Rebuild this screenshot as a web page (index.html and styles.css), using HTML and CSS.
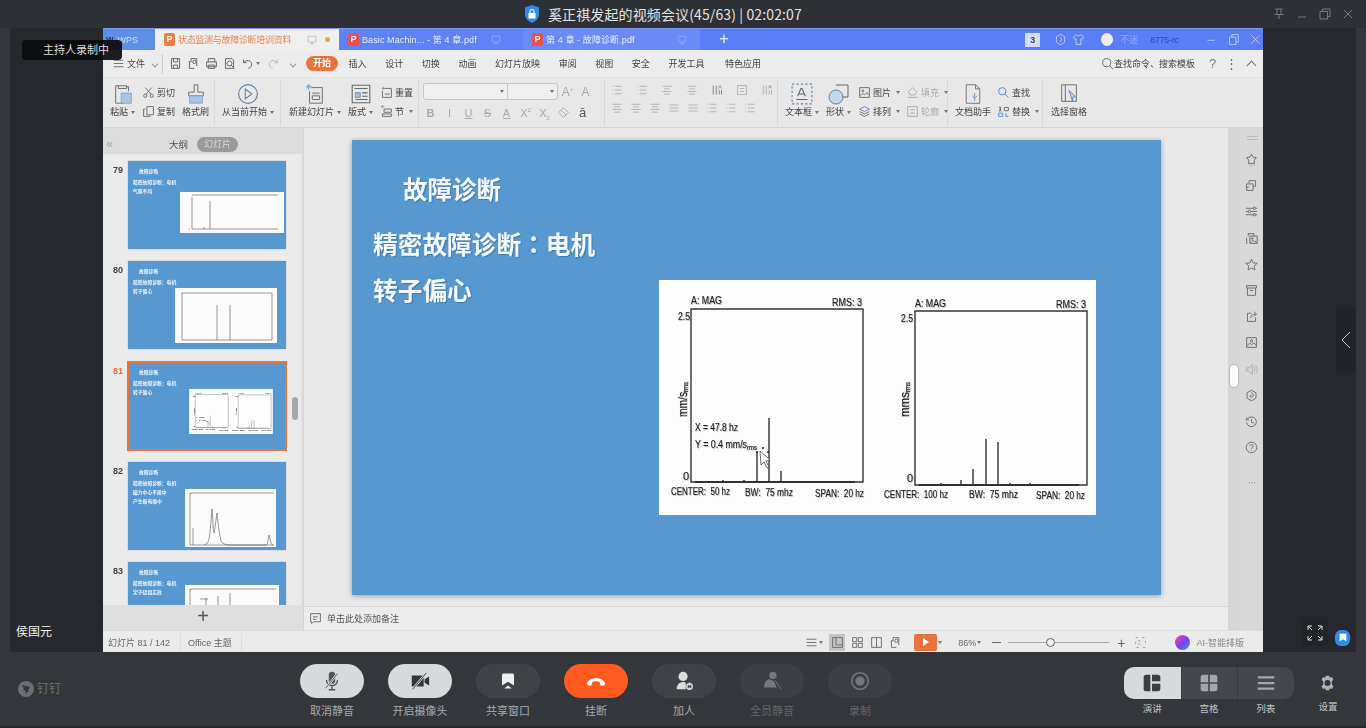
FILE: index.html
```html
<!DOCTYPE html>
<html lang="zh-CN">
<head>
<meta charset="utf-8">
<title>视频会议</title>
<link rel="stylesheet" href="styles.css">
</head>
<body>
<svg class="defs" aria-hidden="true">
  <defs>
    <symbol id="i-line" viewBox="0 0 16 16"><path d="M2 4h12M2 8h12M2 12h12"/></symbol>
    <symbol id="i-min" viewBox="0 0 16 16"><path d="M3 9h9"/></symbol>
    <symbol id="i-restore" viewBox="0 0 16 16"><path d="M3 5h8v9H3zM6 5V2h8v9h-3"/></symbol>
    <symbol id="i-x" viewBox="0 0 16 16"><path d="M3 3l10 10M13 3L3 13"/></symbol>
    <symbol id="i-skin" viewBox="0 0 16 16"><path d="M5 2L1.500 5l2 3L5 7v7h6V7l1.500 1 2-3L11 2c-1 2-5 2-6 0z"/></symbol>
    <symbol id="i-drop" viewBox="0 0 16 16"><path d="M8 1.500l5 3v7l-5 3-5-3v-7z"/><path d="M8 5c1 2 2 3 1.500 4.500-.8 1.300-2.700 1-3-.5"/></symbol>
    <symbol id="i-search" viewBox="0 0 16 16"><circle cx="7" cy="7" r="5"/><path d="M11 11l4 4"/></symbol>
    <symbol id="i-grid" viewBox="0 0 16 16"><path d="M2 2h5v5H2zM9 2h5v5H9zM2 9h5v5H2zM9 9h5v5H9z"/></symbol>
    <symbol id="i-book" viewBox="0 0 16 16"><path d="M2 2h12v12H2zM8 2v12"/></symbol>
    <symbol id="i-normal" viewBox="0 0 16 16"><path d="M2 2h12v12H2zM6 2v9M6 11h8"/></symbol>
    <symbol id="i-save" viewBox="0 0 16 16"><path d="M3 2h10v12H3zM5.500 2v4h5V2M5.500 14v-4h5v4"/></symbol>
    <symbol id="i-print" viewBox="0 0 16 16"><path d="M4 6V2h8v4M2 6h12v6H2zM4 10h8v4H4z"/></symbol>
    <symbol id="i-pdf" viewBox="0 0 16 16"><path d="M5 2h7v9M5 2v4H2M3 6v8h6"/><circle cx="9" cy="6" r="2"/></symbol>
    <symbol id="i-prev" viewBox="0 0 16 16"><path d="M3 2h8l2 2v10H3z"/><circle cx="8" cy="8" r="3"/><path d="M10 10l4 4"/></symbol>
    <symbol id="i-undo" viewBox="0 0 16 16"><path d="M3 3v4h4M3 7c3-4 9-3 10 1 .6 3-1 5-4 6"/></symbol>
    <symbol id="i-redo" viewBox="0 0 16 16"><path d="M13 3v4H9M13 7C10 3 4 4 3 8c-.6 3 1 5 4 6"/></symbol>
    <symbol id="i-paste" viewBox="0 0 20 24"><path d="M5 3H2v19h9M5 3h9v3H5zM14 4h2v5"/><rect x="8" y="11" width="11" height="11" fill="#a9c4e4" stroke="#7fa3cf"/></symbol>
    <symbol id="i-cut" viewBox="0 0 16 16"><circle cx="4" cy="12" r="2"/><circle cx="12" cy="12" r="2"/><path d="M5 10l7-8M11 10L4 2"/></symbol>
    <symbol id="i-copy" viewBox="0 0 16 16"><path d="M6 2h8v10H6zM4 5H2v9h8v-1"/></symbol>
    <symbol id="i-brush" viewBox="0 0 20 24"><path d="M8 2h4v8h6v4H2v-4h6z"/><path d="M3 14h14v8H3z" fill="#a9c4e4" stroke="#7fa3cf"/></symbol>
    <symbol id="i-play" viewBox="0 0 20 20"><circle cx="10" cy="10" r="8.500" stroke="#5f83ad"/><path d="M7.500 5.500l6 4.500-6 4.500z" stroke="#5f83ad"/></symbol>
    <symbol id="i-newslide" viewBox="0 0 20 24"><path d="M6 5h12v17H4V9"/><path d="M7 11h8M7 14h8v4H7z"/><path d="M3 1v7M0 4h7M1 2l4 4M5 2L1 6" stroke="#7fa3cf"/></symbol>
    <symbol id="i-layout" viewBox="0 0 20 20"><path d="M2 2h16v16H2zM4 5h12M5 9h4v4H5zM11 9h5M11 12h5M5 15h11" /><path d="M5 9h4v4H5z" fill="#a9c4e4" stroke="#7fa3cf"/></symbol>
    <symbol id="i-reset" viewBox="0 0 16 16"><path d="M4 3h10v11H3V6M6 10h6"/><path d="M2 3h5M4 1v4" stroke="#5f9fb0"/></symbol>
    <symbol id="i-section" viewBox="0 0 16 16"><path d="M5 5h9v4H5zM3 11h11v3H3z"/><path d="M1 2h4M3 0v4" stroke="#7fa3cf"/></symbol>
    <symbol id="i-eraser" viewBox="0 0 16 16"><path d="M8 2l6 6-6 6-6-6zM5 5l6 6"/></symbol>
    <symbol id="i-bul" viewBox="0 0 16 16"><path d="M5 3h9M5 8h9M5 13h9M2 3h1M2 8h1M2 13h1"/></symbol>
    <symbol id="i-ctr" viewBox="0 0 16 16"><path d="M2 3h12M4 6.500h8M2 10h12M4 13.500h8"/></symbol>
    <symbol id="i-box" viewBox="0 0 16 16"><path d="M2 2h12v12H2zM5 6h6M5 10h6"/></symbol>
    <symbol id="i-mon" viewBox="0 0 16 16"><path d="M2 2h12v9H2zM8 11v3M5 14h6"/></symbol>
    <symbol id="i-cols" viewBox="0 0 16 16"><path d="M3 2v12M7 2v12M11 8v6M14 8v6"/><path d="M10 6l2-4 2 4" stroke="#6f93bf"/></symbol>
    <symbol id="i-textbox" viewBox="0 0 20 20"><path d="M1 1h18v18H1z" stroke-dasharray="2 2" stroke="#5f83ad"/><path d="M6 12l3-7h1l3 7M7 10h5M5 15h10"/></symbol>
    <symbol id="i-shape" viewBox="0 0 22 22"><path d="M8 2h12v12H13"/><circle cx="8" cy="14" r="7" fill="#c4d7ec" stroke="#5f83ad"/></symbol>
    <symbol id="i-pic" viewBox="0 0 16 16"><path d="M2 2h12v12H2z"/><circle cx="6" cy="6" r="1.200"/><path d="M3 12l3-3 2 2 3-3 2 3"/></symbol>
    <symbol id="i-stack" viewBox="0 0 16 16"><path d="M8 2l6 3-6 3-6-3z" stroke="#5f83ad"/><path d="M2 8l6 3 6-3M2 11l6 3 6-3"/></symbol>
    <symbol id="i-fill" viewBox="0 0 16 16"><path d="M8 2l5 5-2 4H5L3 7zM2 14h12"/></symbol>
    <symbol id="i-doc" viewBox="0 0 20 26"><path d="M2 2h11l5 5v17H2zM13 2v5h5"/><path d="M12 12v9M9 15l3 3 3-3" stroke="#5f83ad"/></symbol>
    <symbol id="i-find" viewBox="0 0 16 16"><circle cx="6.500" cy="6.500" r="4.500" stroke="#4c86d0"/><path d="M10 10l4 4" stroke="#4c86d0"/></symbol>
    <symbol id="i-swap" viewBox="0 0 16 16"><path d="M3 2l2 6M5 2L3 8M9 3h5v4H9z"/><path d="M2 10h5v4H2zM11 10v4h3" stroke="#4c86d0"/></symbol>
    <symbol id="i-pane" viewBox="0 0 20 24"><path d="M2 2h16v18H2zM6 2v18"/><path d="M10 8l7 7-3 .5 0 5z" fill="#c4d7ec" stroke="#5f83ad"/></symbol>
    <symbol id="i-note" viewBox="0 0 16 16"><path d="M2 2h12v10H6l-3 2v-2H2zM5 6h6M5 9h4"/></symbol>
    <symbol id="r-a" viewBox="0 0 16 16"><path d="M8 1.500l2 3.500 4 .8-2.700 3 .5 4H4.200l.5-4L2 5.800 6 5zM5 15h1M8 15h1M11 15h1"/></symbol>
    <symbol id="r-b" viewBox="0 0 16 16"><path d="M5 5V2h8v7h-3M2 6h8v8H2zM1 9l2 2 2-2"/></symbol>
    <symbol id="r-c" viewBox="0 0 16 16"><path d="M1 4h9M13 4h2M1 8h3M7 8h8M1 12h9M13 12h2"/><circle cx="11.500" cy="4" r="1.500"/><circle cx="5.500" cy="8" r="1.500"/><circle cx="11.500" cy="12" r="1.500"/></symbol>
    <symbol id="r-d" viewBox="0 0 16 16"><path d="M4 5V2h7v3M2 7v7h1M6 5h9v9H6z"/><circle cx="9" cy="8" r="1"/><path d="M7 13l3-3 2 2 1-1 1 2"/></symbol>
    <symbol id="r-e" viewBox="0 0 16 16"><path d="M8 1.500l2 4.500 5 .5-3.700 3.300 1 5L8 12.300 3.700 14.800l1-5L1 6.500 6 6z"/></symbol>
    <symbol id="r-f" viewBox="0 0 16 16"><path d="M2 2h12v3H2zM3 5v9h10V5M6 8h4"/></symbol>
    <symbol id="r-g" viewBox="0 0 16 16"><path d="M8 4H3v10h10V9M7 10c0-4 3-5 7-5M11 2l3 3-3 3"/></symbol>
    <symbol id="r-h" viewBox="0 0 16 16"><path d="M2 2h12v12H2z"/><circle cx="8" cy="6" r="1.500"/><path d="M2 12l4-3 2 1.500 3-2 3 3"/></symbol>
    <symbol id="r-i" viewBox="0 0 16 16"><path d="M2 6h3l4-4v12l-4-4H2zM11 5c1.500 1.500 1.500 4.500 0 6M13 3c2.500 2.500 2.500 7.500 0 10"/></symbol>
    <symbol id="r-j" viewBox="0 0 16 16"><path d="M8 1.500l5.500 3.200v6.600L8 14.500l-5.500-3.200V4.700z"/><path d="M8 4c1 2 3 3 2 5-1 1.500-3 1.500-4 0 0-1 1-1 2-1"/></symbol>
    <symbol id="r-k" viewBox="0 0 16 16"><path d="M3 5a6 6 0 1 1-1 4M1 6h4M2 3v3M8 5v4l3 1"/></symbol>
    <symbol id="r-l" viewBox="0 0 16 16"><circle cx="8" cy="8" r="6.500"/><path d="M6 6.200c0-2.500 4-2.500 4 0 0 1.800-2 1.800-2 3.300M8 11.500v1"/></symbol>
    <symbol id="f-mic" viewBox="0 0 24 24"><rect x="8.500" y="2" width="7" height="13" rx="3.500" fill="#50535a"/><path d="M6 11c0 8 12 8 12 0M12 17v4M8.500 21.500h7" fill="none" stroke="#50535a" stroke-width="1.500"/><path d="M5 20L18 4" stroke="#d8d9db" stroke-width="2.500"/><path d="M5 20L18 4" stroke="#50535a" stroke-width="1"/></symbol>
    <symbol id="f-cam" viewBox="0 0 24 24"><path d="M3 6h13v12H3zM17 10l5-3v10l-5-3z" fill="#33363b"/><path d="M4 21L19 3" stroke="#d8d9db" stroke-width="2.500"/><path d="M4 21L19 3" stroke="#33363b" stroke-width="1"/></symbol>
    <symbol id="f-share" viewBox="0 0 24 24"><path d="M4 4a2 2 0 0 1 2-2h12a2 2 0 0 1 2 2v14l-8-5-8 5z" fill="#f0f0f0"/><path d="M7 22l5-4 5 4z" fill="#f0f0f0"/></symbol>
    <symbol id="f-hang" viewBox="0 0 24 24"><path d="M2 15c2-8 18-8 20 0l-1 2h-4l-1-4c-2-1-6-1-8 0l-1 4H3z" fill="#fff"/></symbol>
    <symbol id="f-add" viewBox="0 0 24 24"><circle cx="11" cy="7" r="5" fill="#ddd"/><path d="M4 21c0-5 3-8 7-8 2 0 3 .5 3 2v6z" fill="#ddd"/><path d="M18 14v3M18 19v2" stroke="#ddd" stroke-width="2"/><circle cx="18" cy="18" r="3" fill="none" stroke="#ddd" stroke-width="1.500"/></symbol>
    <symbol id="f-muteall" viewBox="0 0 24 24"><circle cx="13" cy="6" r="4" fill="#75777c"/><path d="M3 19c1-6 3-9 6-9l5 2 3 7z" fill="#75777c"/><path d="M14 10l7 11" stroke="#3c3f44" stroke-width="2"/><path d="M15 11l7 10" stroke="#75777c"/></symbol>
    <symbol id="f-rec" viewBox="0 0 24 24"><circle cx="12" cy="12" r="9" fill="none" stroke="#75777c" stroke-width="1.700"/><circle cx="12" cy="12" r="5" fill="#75777c"/></symbol>
    <symbol id="f-spk" viewBox="0 0 24 24"><path d="M2 5a3 3 0 0 1 3-3h5v20H5a3 3 0 0 1-3-3zM12 2h7a3 3 0 0 1 3 3v5H12zM12 13h10v6a3 3 0 0 1-3 3h-7z" fill="#3b3e43"/></symbol>
    <symbol id="f-grid" viewBox="0 0 24 24"><path d="M2 5a3 3 0 0 1 3-3h6v9H2zM13 2h6a3 3 0 0 1 3 3v6h-9zM2 13h9v9H5a3 3 0 0 1-3-3zM13 13h9v6a3 3 0 0 1-3 3h-6z" fill="#a4a6aa"/></symbol>
    <symbol id="f-list" viewBox="0 0 24 24"><path d="M1 3h22v3H1zM1 10.500h22v3H1zM1 18h22v3H1z" fill="#a4a6aa"/></symbol>
    <symbol id="f-gear" viewBox="0 0 24 24"><path d="M9.500 1h5l1 3.200 3-1.300 2.500 4.300-2.500 2.300v5l2.500 2.300-2.500 4.300-3-1.300-1 3.200h-5l-1-3.200-3 1.300L3 16.800l2.500-2.300v-5L3 7.200l2.500-4.300 3 1.300z" fill="#b0b2b5"/><circle cx="12" cy="12" r="4.500" fill="#33363b"/></symbol>
    <symbol id="chart-pair" viewBox="0 0 437 235">
      <rect width="437" height="235" fill="#fdfdfd"/>
      <path class="axis" d="M32 29h172v173H32zM256 31h172v174H256z"/>
      <path class="peak" d="M36 202h160M98 202v-30M110 202v-64M122 202v-11M64 202v-2M85 202v-2M260 205h160M314 205v-16M327 205v-46M339 205v-43M302 205v-5M282 205v-2M351 205v-2M371 205v-2"/>
      <path class="cursor" d="M101 171l10 9-4 1 3 6-2 1-3-6-3 3z"/>
      <path class="peak" d="M97 172h2M103 168h2M108 172h2"/>
      <text class="ct" x="32" y="24" textLength="31" lengthAdjust="spacingAndGlyphs">A: MAG</text>
      <text class="ct" x="173" y="26" textLength="30" lengthAdjust="spacingAndGlyphs">RMS: 3</text>
      <text class="ct" x="256" y="27" textLength="31" lengthAdjust="spacingAndGlyphs">A: MAG</text>
      <text class="ct" x="397" y="28" textLength="30" lengthAdjust="spacingAndGlyphs">RMS: 3</text>
      <text class="ct" x="19" y="40" textLength="12" lengthAdjust="spacingAndGlyphs">2.5</text>
      <text class="ct" x="242" y="42" textLength="12" lengthAdjust="spacingAndGlyphs">2.5</text>
      <text class="ct" x="24" y="200">0</text>
      <text class="ct" x="248" y="202">0</text>
      <text class="ct" x="12" y="215" textLength="59" lengthAdjust="spacingAndGlyphs">CENTER:  50 hz</text>
      <text class="ct" x="86" y="216" textLength="48" lengthAdjust="spacingAndGlyphs">BW:  75 mhz</text>
      <text class="ct" x="156" y="217" textLength="49" lengthAdjust="spacingAndGlyphs">SPAN:  20 hz</text>
      <text class="ct" x="225" y="218" textLength="64" lengthAdjust="spacingAndGlyphs">CENTER:  100 hz</text>
      <text class="ct" x="310" y="218" textLength="49" lengthAdjust="spacingAndGlyphs">BW:  75 mhz</text>
      <text class="ct" x="377" y="219" textLength="49" lengthAdjust="spacingAndGlyphs">SPAN:  20 hz</text>
      <text class="ct" x="36" y="151" textLength="43" lengthAdjust="spacingAndGlyphs">X = 47.8 hz</text>
      <text class="ct" x="36" y="168" textLength="52" lengthAdjust="spacingAndGlyphs">Y = 0.4 mm/s</text>
      <text class="ct sub" x="88" y="170" textLength="10" lengthAdjust="spacingAndGlyphs">rms</text>
      <text class="ct cy" transform="translate(28 137) rotate(-90)" textLength="25" lengthAdjust="spacingAndGlyphs">mm/s</text>
      <text class="ct sub" transform="translate(29 112) rotate(-90)" textLength="10" lengthAdjust="spacingAndGlyphs">rms</text>
      <text class="ct cy" transform="translate(250 137) rotate(-90)" textLength="25" lengthAdjust="spacingAndGlyphs">mms</text>
      <text class="ct sub" transform="translate(251 112) rotate(-90)" textLength="10" lengthAdjust="spacingAndGlyphs">rms</text>
    </symbol>
  </defs>
</svg>

<header class="titlebar">
  <div class="title">
    <svg class="shield" viewBox="0 0 16 18"><path d="M8 0l7 2.500v7c0 4-3.500 7-7 8.500-3.500-1.500-7-4.500-7-8.500v-7z" fill="#2d8cf0"/><path d="M4.500 8h7v5.500h-7z" fill="#fff"/><path d="M6 8V6.500a2 2 0 0 1 4 0V8" fill="none" stroke="#fff" stroke-width="1.200"/></svg>
    <span>奚正祺发起的视频会议(45/63) | 02:02:07</span>
  </div>
  <div class="winctl">
    <svg viewBox="0 0 12 12"><path d="M2.500 1h7M4 1v5M8 1v5M1.500 6.500h9M6 6.500V11"/></svg>
    <svg viewBox="0 0 12 12"><path d="M2 9h8"/></svg>
    <svg viewBox="0 0 12 12"><path d="M1 3.500h7.500V11H1zM3.500 3.500V1H11v7.500H8.500"/></svg>
    <svg viewBox="0 0 12 12"><path d="M2 2l8 8M10 2l-8 8"/></svg>
  </div>
</header>

<main class="stage">
  <section class="wps">
    <div class="tabs">
      <div class="tab-logo"><b>W</b> WPS</div>
      <div class="tab tab-on"><i class="pbadge">P</i><span class="tab-name">状态监测与故障诊断培训资料</span><svg class="mon"><use href="#i-mon"/></svg><i class="dot"></i></div>
      <div class="tab tab-2"><i class="pbadge red">P</i><span class="tab-name">Basic Machin... - 第 4 章.pdf</span><svg class="mon"><use href="#i-mon"/></svg></div>
      <div class="tab tab-3"><i class="pbadge red">P</i><span class="tab-name">第 4 章 - 故障诊断.pdf</span><svg class="mon"><use href="#i-mon"/></svg></div>
      <div class="tab-plus">+</div>
      <div class="tab-right">
        <span class="cnt">3</span>
        <svg class="wh"><use href="#i-drop"/></svg>
        <svg class="wh"><use href="#i-skin"/></svg>
        <i class="avatar"></i>
        <span class="nick">不迷</span>
        <span class="uid">8775-rc</span>
        <svg class="wh w-gap"><use href="#i-min"/></svg>
        <svg class="wh"><use href="#i-restore"/></svg>
        <svg class="wh x"><use href="#i-x"/></svg>
      </div>
    </div>

    <div class="menubar">
      <div class="file"><svg class="ic"><use href="#i-line"/></svg><span>文件</span><i class="chev"></i></div>
      <div class="qa">
        <svg class="ic"><use href="#i-save"/></svg>
        <svg class="ic"><use href="#i-pdf"/></svg>
        <svg class="ic"><use href="#i-print"/></svg>
        <svg class="ic"><use href="#i-prev"/></svg>
        <svg class="ic"><use href="#i-undo"/></svg><i class="car"></i>
        <svg class="ic dim"><use href="#i-redo"/></svg>
        <i class="chev"></i>
      </div>
      <nav class="menus">
        <span class="start">开始</span><span>插入</span><span>设计</span><span>切换</span><span>动画</span><span>幻灯片放映</span><span>审阅</span><span>视图</span><span>安全</span><span>开发工具</span><span class="last">特色应用</span>
      </nav>
      <div class="menu-right">
        <svg class="ic"><use href="#i-search"/></svg><span class="searchtxt">查找命令、搜索模板</span>
        <span class="qm">?</span><span class="qm">⋮</span><span class="up"></span>
      </div>
    </div>

    <div class="ribbon">
      <div class="g g1">
        <div class="big"><svg class="il"><use href="#i-paste"/></svg><span>粘贴<i class="car"></i></span></div>
        <div class="col"><div class="sm"><svg class="ic"><use href="#i-cut"/></svg>剪切</div><div class="sm"><svg class="ic"><use href="#i-copy"/></svg>复制</div></div>
        <div class="big"><svg class="il"><use href="#i-brush"/></svg><span>格式刷</span></div>
      </div>
      <div class="g g2">
        <div class="big"><svg class="il"><use href="#i-play"/></svg><span>从当前开始<i class="car"></i></span></div>
      </div>
      <div class="g g3">
        <div class="big"><svg class="il"><use href="#i-newslide"/></svg><span>新建幻灯片<i class="car"></i></span></div>
        <div class="big"><svg class="il"><use href="#i-layout"/></svg><span>版式<i class="car"></i></span></div>
        <div class="col"><div class="sm"><svg class="ic"><use href="#i-reset"/></svg>重置</div><div class="sm"><svg class="ic"><use href="#i-section"/></svg>节<i class="car"></i></div></div>
      </div>
      <div class="g g4">
        <div class="font-row">
          <div class="inp inp-a"><i class="car"></i></div><div class="inp inp-b"><i class="car"></i></div>
          <span class="aa">A<sup>+</sup></span><span class="aa">A<sup>-</sup></span>
        </div>
        <div class="fmt-row">
          <span><b>B</b></span><span><em>I</em></span><span><u>U</u></span><span><s>S</s></span><span><u>A</u></span><span>X<sup>2</sup></span><span>X<sub>2</sub></span><svg class="ic"><use href="#i-eraser"/></svg><span class="dk">ā</span>
        </div>
      </div>
      <div class="g g5">
        <div class="pr pr1">
          <svg class="ic"><use href="#i-bul"/></svg><svg class="ic"><use href="#i-bul"/></svg><svg class="ic"><use href="#i-ctr"/></svg><svg class="ic"><use href="#i-ctr"/></svg><svg class="ic st"><use href="#i-cols"/></svg><svg class="ic"><use href="#i-box"/></svg><svg class="ic"><use href="#i-cols"/></svg>
        </div>
        <div class="pr pr2">
          <svg class="ic"><use href="#i-ctr"/></svg><svg class="ic"><use href="#i-ctr"/></svg><svg class="ic"><use href="#i-ctr"/></svg><svg class="ic"><use href="#i-line"/></svg><svg class="ic"><use href="#i-line"/></svg><svg class="ic"><use href="#i-bul"/></svg><svg class="ic"><use href="#i-bul"/></svg><svg class="ic"><use href="#i-bul"/></svg>
        </div>
      </div>
      <div class="g g6">
        <div class="big"><svg class="il"><use href="#i-textbox"/></svg><span>文本框<i class="car"></i></span></div>
        <div class="big"><svg class="il"><use href="#i-shape"/></svg><span>形状<i class="car"></i></span></div>
        <div class="col"><div class="sm"><svg class="ic"><use href="#i-pic"/></svg>图片<i class="car"></i></div><div class="sm"><svg class="ic st"><use href="#i-stack"/></svg>排列<i class="car"></i></div></div>
        <div class="col off"><div class="sm"><svg class="ic"><use href="#i-fill"/></svg>填充<i class="car"></i></div><div class="sm"><svg class="ic"><use href="#i-box"/></svg>轮廓<i class="car"></i></div></div>
      </div>
      <div class="g g7">
        <div class="big"><svg class="il"><use href="#i-doc"/></svg><span>文档助手</span></div>
        <div class="col"><div class="sm"><svg class="ic"><use href="#i-find"/></svg>查找</div><div class="sm"><svg class="ic"><use href="#i-swap"/></svg>替换<i class="car"></i></div></div>
      </div>
      <div class="g g8">
        <div class="big"><svg class="il"><use href="#i-pane"/></svg><span>选择窗格</span></div>
      </div>
    </div>

    <div class="work">
      <aside class="side">
        <div class="side-head"><span class="coll">«</span><span class="side-t1">大纲</span><span class="pill">幻灯片</span></div>
        <div class="thumbs">
          <div class="th"><span class="num">79</span>
            <svg class="thumb" viewBox="0 0 158 88"><rect width="158" height="88" class="tb"/><text class="tt" x="11" y="12">故障诊断</text><text class="tt" x="5" y="23">精密故障诊断：电机</text><text class="tt" x="5" y="32">气隙不均</text><rect x="52" y="31" width="104" height="41" class="tw"/><path class="ta" d="M64 36v32h86M64 34h86M82 68V40M61 68h1M76 68v-2"/></svg>
          </div>
          <div class="th"><span class="num">80</span>
            <svg class="thumb" viewBox="0 0 158 88"><rect width="158" height="88" class="tb"/><text class="tt" x="11" y="12">故障诊断</text><text class="tt" x="5" y="23">精密故障诊断：电机</text><text class="tt" x="5" y="32">转子偏心</text><rect x="47" y="27" width="102" height="55" class="tw"/><path class="ta" d="M54 32h90v47H54zM89 79V44M102 79V44"/></svg>
          </div>
          <div class="th cur"><span class="num">81</span>
            <svg class="thumb" viewBox="0 0 158 88"><rect width="158" height="88" class="tb"/><text class="tt" x="11" y="12">故障诊断</text><text class="tt" x="5" y="23">精密故障诊断：电机</text><text class="tt" x="5" y="32">转子偏心</text><use href="#chart-pair" x="61" y="27" width="84" height="45"/></svg>
          </div>
          <div class="th"><span class="num">82</span>
            <svg class="thumb" viewBox="0 0 158 88"><rect width="158" height="88" class="tb"/><text class="tt" x="11" y="12">故障诊断</text><text class="tt" x="5" y="23">精密故障诊断：电机</text><text class="tt" x="5" y="32">磁力中心不居中</text><text class="tt" x="5" y="41">产生振电振中</text><rect x="57" y="27" width="91" height="58" class="tw"/><path class="ta" d="M62 31h84M62 31v52h84M65 83V66M76 83c2-2 3 0 4-3 2-3 3-22 4-33 1 12 1 20 2 24 1-4 2-14 3-20 1 10 2 20 4 28 2 4 8 4 10 4h35c2-1 2-6 3-10 1 4 2 10 4 10"/></svg>
          </div>
          <div class="th"><span class="num">83</span>
            <svg class="thumb" viewBox="0 0 158 88"><rect width="158" height="88" class="tb"/><text class="tt" x="11" y="12">故障诊断</text><text class="tt" x="5" y="23">精密故障诊断：电机</text><text class="tt" x="5" y="32">定子绕组实效</text><rect x="57" y="23" width="94" height="65" class="tw"/><path class="ta" d="M62 27h86M62 27v61M78 36v52M90 34v54M102 31v57M72 37h8"/></svg>
          </div>
          <i class="side-scroll"></i>
        </div>
        <div class="addbar">+</div>
      </aside>
      <div class="canvas-wrap">
        <div class="canvas">
          <article class="slide" lang="zh-Hant">
            <h1>故障诊断</h1>
            <h2>精密故障诊断：电机</h2>
            <h2 class="h2b">转子偏心</h2>
            <svg class="charts" viewBox="0 0 437 235"><use href="#chart-pair"/></svg>
          </article>
        </div>
        <div class="notes"><svg class="ic"><use href="#i-note"/></svg>单击此处添加备注</div>
      </div>
      <div class="vscroll"><i></i></div>
      <div class="rail">
        <svg class="ir"><use href="#r-a"/></svg><svg class="ir"><use href="#r-b"/></svg><svg class="ir"><use href="#r-c"/></svg><svg class="ir"><use href="#r-d"/></svg><svg class="ir"><use href="#r-e"/></svg><svg class="ir"><use href="#r-f"/></svg><svg class="ir"><use href="#r-g"/></svg><svg class="ir"><use href="#r-h"/></svg><svg class="ir lt"><use href="#r-i"/></svg><svg class="ir"><use href="#r-j"/></svg><svg class="ir"><use href="#r-k"/></svg><svg class="ir"><use href="#r-l"/></svg>
        <span class="more">···</span>
      </div>
    </div>

    <div class="statusbar">
      <span class="s1">幻灯片 81 / 142</span><span class="s2">Office 主题</span>
      <div class="s-right">
        <svg class="ic"><use href="#i-line"/></svg><i class="car"></i>
        <span class="vw"><svg class="ic"><use href="#i-normal"/></svg></span>
        <svg class="ic"><use href="#i-grid"/></svg>
        <svg class="ic"><use href="#i-book"/></svg>
        <svg class="ic"><use href="#i-pdf"/></svg>
        <span class="playb"></span><i class="car"></i>
        <span class="zoom">86%</span><i class="car"></i>
        <span class="minus"></span>
        <span class="slider"><i></i></span>
        <span class="plus">+</span>
        <svg class="ic fit"><use href="#i-box"/></svg>
        <i class="ball"></i><span class="ai">AI-智能排版</span>
      </div>
    </div>
  </section>

  <div class="rec-badge">主持人录制中</div>
  <div class="speaker">侯国元</div>
  <div class="collapse"><svg viewBox="0 0 10 18"><path d="M9 1L1 9l8 8"/></svg></div>
  <div class="fullbtn"><svg viewBox="0 0 16 16"><path d="M1 5V1h4M1 1l4 4M15 5V1h-4M15 1l-4 4M1 11v4h4M1 15l4-4M15 11v4h-4M15 15l-4-4"/></svg></div>
  <div class="bluepill"><svg viewBox="0 0 12 12"><path d="M2 1h8v9l-4-2.500L2 10z" fill="#fff"/></svg></div>
</main>

<footer class="toolbar">
  <div class="brand"><svg viewBox="0 0 16 16"><circle cx="8" cy="8" r="8" fill="#6c6f73"/><path d="M4 4l8 2-2 3 1 1-4 3 1-3-3-1 1-1z" fill="#33363b"/></svg><span>钉钉</span></div>
  <div class="actions">
    <div class="act"><div class="btn light"><svg><use href="#f-mic"/></svg></div><span>取消静音</span></div>
    <div class="act"><div class="btn light"><svg><use href="#f-cam"/></svg></div><span>开启摄像头</span></div>
    <div class="act"><div class="btn"><svg class="sm-i"><use href="#f-share"/></svg></div><span>共享窗口</span></div>
    <div class="act"><div class="btn hang"><svg><use href="#f-hang"/></svg></div><span>挂断</span></div>
    <div class="act"><div class="btn"><svg><use href="#f-add"/></svg></div><span>加人</span></div>
    <div class="act off"><div class="btn"><svg><use href="#f-muteall"/></svg></div><span>全员静音</span></div>
    <div class="act off"><div class="btn"><svg><use href="#f-rec"/></svg></div><span>录制</span></div>
  </div>
  <div class="views">
    <div class="view"><div class="seg seg-on"><svg><use href="#f-spk"/></svg></div><span>演讲</span></div>
    <div class="view"><div class="seg"><svg><use href="#f-grid"/></svg></div><span>宫格</span></div>
    <div class="view"><div class="seg seg-end"><svg class="li"><use href="#f-list"/></svg></div><span>列表</span></div>
  </div>
  <div class="settings"><svg><use href="#f-gear"/></svg><span>设置</span></div>
</footer>
</body>
</html>
```

FILE: styles.css
```css
* { box-sizing: border-box; }
html, body { margin: 0; height: 100%; }
body {
  width: 1366px; height: 728px; overflow: hidden;
  display: flex; flex-direction: column;
  background: #33363b; color: #ddd;
  font-family: "Liberation Sans", "Noto Sans CJK SC", sans-serif;
}
.defs { display: none; }
svg { display: block; }
i, em { font-style: normal; }

/* title bar */
.titlebar { height: 28px; flex: none; display: flex; align-items: center; position: relative; background: #2d3035; }
.title { position: absolute; left: 524px; top: 4px; display: flex; align-items: center; gap: 8px; font-size: 14px; color: #e4e4e4; line-height: 20px; white-space: nowrap; letter-spacing: .12px; font-family: "Noto Sans CJK SC", sans-serif; }
.shield { width: 16px; height: 18px; }
.winctl { margin-left: auto; margin-right: 12px; display: flex; gap: 11px; }
.winctl svg { width: 12px; height: 12px; fill: none; stroke: #777a7e; }

/* stage */
.stage { position: relative; flex: none; height: 624px; margin: 0 10px; background: #25282c; padding-left: 93px; }
.wps { width: 1160px; height: 624px; display: flex; flex-direction: column; background: #e9e9e9; color: #444; font-size: 9px; filter: blur(.45px); }

.ic { width: 13px; height: 13px; fill: none; stroke: #666; stroke-width: 1.100; flex: none; }
.ic.dim { stroke: #bbb; }
.il { width: 22px; height: 22px; fill: none; stroke: #666; stroke-width: 1; }
.car { display: inline-block; width: 0; height: 0; margin-left: 3px; vertical-align: middle; border-top: 3px solid #777; border-left: 2px solid transparent; border-right: 2px solid transparent; }
.chev { width: 6px; height: 6px; display: inline-block; border: solid #888; border-width: 0 1px 1px 0; transform: rotate(45deg) scale(.8); }

/* tabs */
.tabs { height: 22px; flex: none; display: flex; align-items: stretch; background: #5a7ef5; color: #e8edff; font-size: 9px; border-top: 1px solid #7d97f5; }
.tab-logo { width: 52px; background: #5c8fe6; display: flex; align-items: center; gap: 4px; padding-left: 3px; color: #d3def5; }
.tab-logo b { font-size: 8px; color: #26365c; }
.tab { width: 184px; display: flex; align-items: center; padding-left: 9px; gap: 3px; }
.tab-on { background: #efefef; color: #e8854f; }
.tab-on .tab-name { letter-spacing: -.3px; }
.tab-2 { background: #5f83f7; }
.tab-3 { width: 177px; background: #6b8cf8; }
.tab-name { flex: 1; white-space: nowrap; overflow: hidden; letter-spacing: .1px; }
.pbadge { width: 11px; height: 13px; flex: none; border-radius: 2px; background: #ea7d42; color: #fff; font-size: 9px; font-weight: 700; line-height: 13px; text-align: center; }
.pbadge.red { background: #e8504f; }
.mon { width: 10px; height: 10px; fill: none; stroke: #9eb3f7; margin-right: 22px; flex: none; }
.tab-3 .mon { margin-right: 13px; }
.tab-on .mon { stroke: #aaa; margin-right: 5px; }
.dot { width: 5px; height: 5px; border-radius: 50%; background: #eca443; margin-right: 9px; align-self: center; }
.tab-plus { width: 48px; text-align: center; font-size: 16px; line-height: 19px; color: #f0f3ff; }
.tab-right { margin-left: auto; display: flex; align-items: center; gap: 5px; padding-right: 1px; }
.cnt { width: 15px; height: 14px; margin-right: 9px; background: #d5ddf8; color: #444; text-align: center; line-height: 14px; font-size: 9px; font-weight: 700; }
.wh { width: 13px; height: 13px; fill: none; stroke: #c9d5fb; }
.avatar { width: 12px; height: 13px; margin-left: 11px; border-radius: 50%; background: #eee; }
.nick { color: #92a9f7; margin-left: 2px; }
.uid { color: #2f4aa8; margin-left: 7px; font-size: 8.500px; }
.w-gap { margin-left: 21px; margin-right: 4px; }
.wh.x { margin-left: 4px; }

/* menu */
.menubar { height: 28px; flex: none; display: flex; align-items: center; background: #ececec; border-bottom: 1px solid #e2e2e2; padding-left: 9px; }
.file { width: 51px; display: flex; align-items: center; gap: 2px; border-right: 1px solid #ccc; height: 20px; }
.file .chev { margin-left: 5px; }
.qa { width: 143px; display: flex; align-items: center; gap: 5px; padding-left: 6px; }
.qa .ic { stroke-width: 1.200; }
.qa .car { margin: 0 2px 0 -3px; }
.qa .chev { margin-left: 5px; }
.menus { display: flex; align-items: center; gap: 18.600px; }
.menus span { white-space: nowrap; color: #444; }
.menus .start { width: 32px; height: 15px; line-height: 15px; text-align: center; margin-right: -8px; border-radius: 8px; background: #e8743b; color: #fff; font-weight: 700; }
.menus .last { margin-left: 2px; }
.menu-right { margin-left: auto; display: flex; align-items: center; padding-right: 5px; }
.searchtxt { margin-right: 8px; }
.qm { width: 19px; text-align: center; font-size: 13px; color: #777; }
.up { width: 7px; height: 7px; margin: 3px 3px 0 7px; border: solid #777; border-width: 1px 0 0 1px; transform: rotate(45deg); }

/* ribbon */
.ribbon { height: 50px; flex: none; display: flex; background: #e8e8e8; padding-left: 5px; border-bottom: 1px solid #d5d5d5; }
.g { height: 46px; margin-top: 2px; border-right: 1px solid #d8d8d8; display: flex; align-items: stretch; flex: none; gap: 8px; padding: 0 5px 0 2px; }
.g1 { width: 107px; gap: 7px; }
.g2 { width: 66px; padding-left: 7px; }
.g3 { width: 138px; padding-left: 8px; gap: 7px; }
.g4 { width: 186px; flex-direction: column; gap: 5px; padding: 3px 4px; }
.g5 { width: 173px; flex-direction: column; gap: 6px; padding: 4px 6px; }
.g6 { width: 170px; padding-left: 7px; gap: 7px; }
.g6 .off { margin-left: -1px; }
.g7 { width: 95px; padding-left: 7px; gap: 6px; }
.g8 { width: 50px; padding-left: 8px; border: 0; }
.big { display: flex; flex-direction: column; align-items: center; gap: 1px; padding-top: 3px; white-space: nowrap; }
.big span { line-height: 13px; }
.col { display: flex; flex-direction: column; gap: 5px; padding-top: 5px; }
.sm { display: flex; align-items: center; gap: 2px; height: 14px; white-space: nowrap; }
.off { color: #aaa; }
.off .ic { stroke: #aaa; }
.font-row { display: flex; align-items: center; }
.inp { height: 17px; background: #efefef; border: 1px solid #c6c6c6; display: flex; align-items: center; justify-content: flex-end; padding-right: 3px; }
.inp-a { width: 85px; border-radius: 3px 0 0 3px; }
.inp-b { width: 50px; border-radius: 0 3px 3px 0; border-left: 0; }
.aa { width: 19px; text-align: center; font-size: 12px; color: #aaa; }
sup, sub { font-size: 6px; line-height: 0; }
.fmt-row { display: flex; align-items: center; gap: 6px; color: #aaa; font-size: 11px; padding-left: 1px; }
.fmt-row span { width: 13px; text-align: center; }
.fmt-row .ic { stroke: #aaa; }
.fmt-row .dk { color: #555; font-size: 13px; }
.pr { display: flex; align-items: center; }
.pr .ic { stroke: #aaa; width: 12px; height: 12px; }
.pr1 { gap: 13px; }
.pr2 { gap: 7px; }
.pr .st { stroke: #777; }
.sm .st { stroke: #666; }

/* work area */
.work { flex: 1; min-height: 0; display: flex; background: #e6e6e6; }
.side { width: 200px; flex: none; display: flex; flex-direction: column; background: #e0e0e0; }
.side-head { height: 26px; flex: none; display: flex; align-items: center; background: #dcdcdc; padding: 6px 0 0 3px; color: #555; }
.coll { width: 63px; font-size: 13px; color: #aaa; line-height: 16px; }
.side-t1 { font-size: 9.500px; color: #555; width: 28px; }
.pill { width: 41px; height: 15px; border-radius: 8px; background: #9a9a9a; color: #d8d8d8; text-align: center; line-height: 15px; font-size: 9px; }
.thumbs { flex: 1; min-height: 0; overflow: hidden; position: relative; background: #ebebeb; margin-right: 2px; padding-top: 7px; display: flex; flex-direction: column; gap: 12.300px; }
.th { flex: none; display: flex; height: 88px; }
.num { width: 23px; text-align: right; padding-right: 3px; font-size: 9px; font-weight: 700; color: #444; line-height: 18px; margin-right: 2px; }
.thumb { width: 158px; height: 88px; flex: none; box-shadow: 0 0 1px #999; }
.cur .num { color: #e0743b; }
.cur .thumb { outline: 2px solid #e8743b; outline-offset: -1px; }
.tb { fill: #5798d0; }
.tw { fill: #fbfbfb; }
.ta { fill: none; stroke: #555; stroke-width: .6; }
.tt { fill: #eef5fb; font-size: 4.800px; font-weight: 700; }
.side-scroll { position: absolute; left: 189px; top: 243px; width: 6px; height: 23px; border-radius: 3px; background: #a8a8a8; }
.addbar { height: 25px; flex: none; text-align: center; font-size: 20px; line-height: 23px; color: #555; background: #dfdfdf; }
.canvas-wrap { flex: 1; min-width: 0; display: flex; flex-direction: column; border-left: 1px solid #d4d4d4; }
.canvas { flex: 1; min-height: 0; padding: 12px 0 0 48px; background: #e9e9e9; border-bottom: 1px solid #d8d8d8; }
.slide { position: relative; width: 809px; height: 455px; background: #5798d0; box-shadow: 0 1px 5px rgba(0,0,0,.35); color: #f4f9fc; font-family: "Noto Sans CJK TC", sans-serif; font-weight: 700; padding: 31px 0 0 21px; text-shadow: 1px 1px 1px rgba(0,0,0,.22); }
.slide h1 { margin: 0 0 0 30px; font-size: 24.500px; line-height: 36px; font-weight: 700; }
.slide h2 { margin: 18px 0 0; font-size: 24.700px; line-height: 36px; font-weight: 700; white-space: nowrap; }
.slide .h2b { margin-top: 10px; }
.charts { position: absolute; left: 307px; top: 140px; width: 437px; height: 235px; }
.axis { fill: none; stroke: #333; stroke-width: 1.400; }
.peak { fill: none; stroke: #222; stroke-width: 1.300; }
.cursor { fill: #fff; stroke: #333; stroke-width: .7; }
.ct { font-family: "Liberation Sans", sans-serif; font-size: 11px; fill: #222; font-weight: 400; white-space: pre; stroke: #222; stroke-width: .15; }
.ct.cy { font-size: 12.500px; }
.ct.sub { font-size: 7px; }
.notes { height: 23px; flex: none; display: flex; align-items: center; gap: 5px; padding-left: 5px; font-size: 9px; color: #555; background: #ececec; }
.vscroll { width: 12px; flex: none; background: #d6d6d6; position: relative; }
.vscroll i { position: absolute; left: 1px; top: 236px; width: 10px; height: 24px; border-radius: 5px; background: #fdfdfd; border: 1px solid #bbb; }
.rail { width: 23px; flex: none; background: #d8d8d8; display: flex; flex-direction: column; align-items: center; gap: 13.200px; padding-top: 25px; position: relative; }
.rail::before { content: ""; position: absolute; left: 7px; top: 8px; width: 11px; height: 2px; border: solid #bbb; border-width: 1px 0; }
.ir { width: 13px; height: 13px; fill: none; stroke: #666; stroke-width: 1.100; flex: none; }
.ir.lt { stroke: #aaa; }
.more { color: #999; font-size: 11px; line-height: 12px; margin-top: 9px; letter-spacing: -1px; }

/* status */
.statusbar { height: 22px; flex: none; display: flex; align-items: center; background: #ebebeb; border-top: 1px solid #dcdcdc; padding-top: 2px; font-size: 9px; color: #666; }
.s1 { width: 78px; padding-left: 5px; border-right: 1px solid #ddd; line-height: 18px; }
.s2 { width: 61px; padding-left: 7px; border-right: 1px solid #ddd; line-height: 18px; }
.s-right { margin-left: auto; display: flex; align-items: center; gap: 6px; padding-right: 19px; }
.s-right .car { margin: 0 0 0 -5px; }
.vw { width: 16px; height: 17px; background: #c4c4c4; display: flex; align-items: center; justify-content: center; }
.playb { width: 23px; height: 17px; margin-left: 6px; background: #e8743b; border-radius: 2px; position: relative; }
.playb::after { content: ""; position: absolute; left: 9px; top: 4px; border-left: 6px solid #fff; border-top: 4.500px solid transparent; border-bottom: 4.500px solid transparent; }
.zoom { margin-left: 10px; }
.minus { width: 9px; height: 1.500px; background: #666; margin-left: 5px; }
.slider { width: 101px; height: 1px; background: #aaa; position: relative; margin: 0 0 0 1px; }
.slider i { position: absolute; left: 38px; top: -4px; width: 9px; height: 9px; border-radius: 50%; background: #eee; border: 1px solid #666; }
.plus { font-size: 14px; line-height: 14px; margin: 0 3px 0 2px; }
.fit { stroke: #999; stroke-dasharray: 3 5; }
.ball { width: 15px; height: 15px; margin-left: 22px; border-radius: 50%; background: linear-gradient(135deg, #ee4fa0, #7a3ff0 55%, #3fa0f0); }
.ai { color: #888; white-space: nowrap; }

/* overlays on the video stage */
.rec-badge { position: absolute; left: 12px; top: 12px; width: 100px; height: 20px; padding-left: 21px; border-radius: 4px; background: rgba(10,10,12,.92); color: #ddd; font-size: 11px; line-height: 20px; white-space: nowrap; }
.speaker { position: absolute; left: 6px; top: 595px; font-size: 12px; line-height: 18px; color: #f2f2f2; }
.collapse { position: absolute; left: 1326px; top: 280px; width: 20px; height: 64px; background: #212428; display: flex; align-items: center; justify-content: center; }
.collapse svg { width: 10px; height: 18px; fill: none; stroke: #c8c8c8; }
.fullbtn { position: absolute; left: 1292px; top: 592px; width: 26px; height: 26px; background: #212428; display: flex; align-items: center; justify-content: center; }
.fullbtn svg { width: 16px; height: 16px; fill: none; stroke: #ddd; }
.bluepill { position: absolute; left: 1325px; top: 602px; width: 15px; height: 16px; border-radius: 6px; background: #2d8cf0; display: flex; align-items: center; justify-content: center; }
.bluepill svg { width: 10px; height: 10px; }

/* toolbar */
.toolbar { flex: 1; min-height: 0; display: flex; align-items: flex-start; background: #33363b; border-bottom: 2px solid #26282c; }
.brand { width: 300px; flex: none; display: flex; align-items: center; gap: 3px; padding: 29px 0 0 18px; color: #6e7175; font-size: 12px; line-height: 16px; }
.brand svg { width: 16px; height: 16px; }
.actions { display: flex; gap: 24px; padding-top: 12px; }
.act { width: 64px; display: flex; flex-direction: column; align-items: center; gap: 5px; font-size: 11px; line-height: 16px; color: #a8aaae; white-space: nowrap; }
.btn { width: 64px; height: 34px; border-radius: 17px; background: #3f4247; display: flex; align-items: center; justify-content: center; }
.btn svg { width: 22px; height: 22px; }
.btn .sm-i { width: 18px; height: 18px; }
.btn.light { background: #d8d9db; }
.btn.hang { background: #ff5a1f; }
.act.off { color: #63666a; }
.act.off .btn { background: #3c3f44; }
.views { margin-left: 232px; display: flex; padding-top: 15px; }
.view { width: 56.670px; display: flex; flex-direction: column; align-items: center; gap: 3px; font-size: 9.500px; line-height: 14px; color: #c0c2c5; }
.seg { width: 100%; height: 32px; background: #44474c; display: flex; align-items: center; justify-content: center; border-left: 1px solid #37393e; }
.seg svg { width: 20px; height: 20px; }
.seg .li { width: 20px; height: 18px; }
.seg-on { background: #d8d9db; border: 0; border-radius: 10px 0 0 10px; }
.seg-end { border-radius: 0 10px 10px 0; }
.settings { width: 68px; flex: none; display: flex; flex-direction: column; align-items: center; gap: 9px; padding-top: 23px; font-size: 9.500px; line-height: 14px; color: #c0c2c5; }
.settings svg { width: 17px; height: 16px; }
```
